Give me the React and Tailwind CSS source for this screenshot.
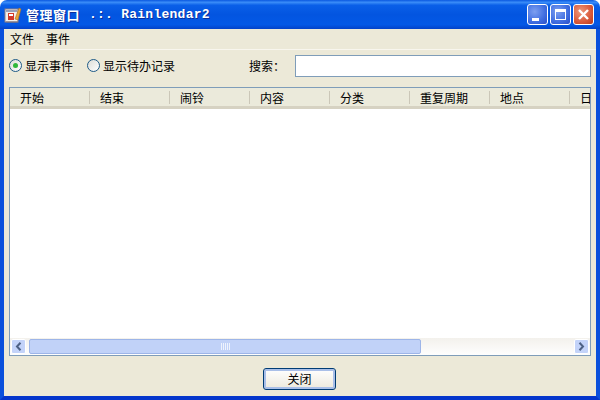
const columns = ['开始', '结束', '闹铃', '内容', '分类', '重复周期', '地点', '日期'];

const cjk = { fontFamily: '"Noto Sans CJK SC", "Liberation Sans", sans-serif' };

const AppIcon = () => (
  <svg width="18" height="18" viewBox="0 0 18 18">
    <rect x="1" y="3" width="13" height="13" fill="#f4f0ea" stroke="#8a7f88" />
    <rect x="2" y="4" width="11" height="2" fill="#9aa0b8" />
    <rect x="4" y="7" width="6" height="7" fill="#d43a2a" />
    <rect x="5" y="8" width="4" height="2" fill="#fff" />
    <path d="M11 13 L15 2 L17 3 L14 14 Z" fill="#e8a53a" stroke="#a8702a" strokeWidth="0.6" />
    <path d="M2 16 H14" stroke="#7a7078" />
  </svg>
);

const CaptionButton = ({ kind }) => {
  const bg = kind === 'close'
    ? 'bg-[radial-gradient(circle_at_35%_35%,#ee9a7c,#d9593a_60%,#b83a1c)]'
    : 'bg-[radial-gradient(circle_at_35%_35%,#7d9ff0,#3f6de0_60%,#2a4fc8)]';
  return (
    <div className={`w-[21px] h-[21px] rounded-[3px] border border-white flex items-center justify-center ${bg}`}>
      {kind === 'min' && <div className="w-[7px] h-[3px] bg-white mt-[9px] mr-[4px]" />}
      {kind === 'max' && <div className="w-[11px] h-[11px] border border-white border-t-[3px]" />}
      {kind === 'close' && (
        <svg width="13" height="13" viewBox="0 0 13 13">
          <path d="M2 2 L11 11 M11 2 L2 11" stroke="#fff" strokeWidth="2.4" />
        </svg>
      )}
    </div>
  );
};

const Radio = ({ checked, label }) => (
  <div className="flex items-center gap-[3px]">
    <div className="w-[13px] h-[13px] rounded-full border border-[#1d5a87] bg-[linear-gradient(135deg,#dcdcd6,#ffffff)] flex items-center justify-center">
      {checked && <div className="w-[5px] h-[5px] rounded-full bg-[#2fb83a]" />}
    </div>
    <span className="text-[12px] leading-none text-black">{label}</span>
  </div>
);

const ScrollButton = ({ dir }) => (
  <div className="w-[15px] h-[15px] rounded-[2px] bg-[#c3d3f9] border border-white flex items-center justify-center shrink-0">
    <svg width="7" height="9" viewBox="0 0 7 9">
      <path d={dir === 'left' ? 'M5.5 0.8 L2 4.5 L5.5 8.2' : 'M1.5 0.8 L5 4.5 L1.5 8.2'} fill="none" stroke="#4d6185" strokeWidth="2" />
    </svg>
  </div>
);

export default function App() {
  return (
    <div className="w-[600px] h-[400px] flex flex-col overflow-hidden" style={cjk}>
      <div className="h-[29px] shrink-0 rounded-t-[7px] flex items-center pl-[4px] pr-[6px] bg-[linear-gradient(180deg,#0a58e0_0%,#3a8cf8_8%,#0a5fe8_18%,#0355e0_50%,#0358e6_85%,#0342c8_100%)]">
        <AppIcon />
        <div className="ml-[4px] flex items-center text-white font-bold text-[13px] leading-none [text-shadow:1px_1px_0_#0a2f9c]">
          <span className="tracking-[0.5px]">管理窗口</span>
          <span className="ml-[9px] tracking-[0.25px]" style={{ fontFamily: '"Liberation Mono", monospace' }}>.:. Rainlendar2</span>
        </div>
        <div className="ml-auto flex gap-[2px]">
          <CaptionButton kind="min" />
          <CaptionButton kind="max" />
          <CaptionButton kind="close" />
        </div>
      </div>

      <div className="flex-1 min-h-0 flex flex-col bg-[#ece9d8] border-x-[4px] border-b-[4px] border-x-[#0a50dc] border-b-[#0335cc]">
        <div className="h-[21px] shrink-0 flex items-center gap-[12px] pl-[6px] border-b border-[#f8f6ee] text-[12px] leading-none text-black">
          <span>文件</span>
          <span>事件</span>
        </div>

        <div className="h-[30px] shrink-0 flex items-center pt-[1px] pl-[5px] pr-[5px]">
          <div className="w-[78px]"><Radio checked label="显示事件" /></div>
          <Radio label="显示待办记录" />
          <span className="ml-[74px] text-[12px] leading-none text-black w-[46px]">搜索：</span>
          <div className="flex-1 h-[22px] bg-white border border-[#7f9db9]" />
        </div>

        <div className="mt-[7px] mx-[5px] h-[269px] shrink-0 flex flex-col bg-white border border-[#7f9db9] overflow-hidden">
          <div className="h-[21px] shrink-0 flex bg-[#ebeadb] border-b-[3px] border-[#d6d2c2] overflow-hidden">
            {columns.map((name) => (
              <div key={name} className="w-[80px] shrink-0 relative pl-[10px] text-[12px] leading-[19px] text-black">
                {name}
                <div className="absolute right-0 top-[3px] h-[13px] w-px bg-[#cbc7b8]" />
              </div>
            ))}
          </div>
          <div className="flex-1" />
          <div className="h-[17px] shrink-0 flex items-center pl-[1px] pr-[1px] bg-[linear-gradient(180deg,#f3f1ec,#fefefe)]">
            <ScrollButton dir="left" />
            <div className="ml-[3px] w-[392px] h-[15px] rounded-[2px] bg-[#c1d2f8] border border-[#9db5e8] flex items-center justify-center">
              <div className="flex gap-px">
                {[0, 1, 2, 3, 4].map((i) => <div key={i} className="w-px h-[7px] bg-[#eef3fd]" />)}
              </div>
            </div>
            <div className="flex-1" />
            <ScrollButton dir="right" />
          </div>
        </div>

        <div className="flex-1 flex items-start justify-center pt-[12px] pr-[1px]">
          <div className="w-[73px] h-[22px] rounded-[3px] border border-[#003c74] bg-[linear-gradient(180deg,#ffffff,#ece9dc)] shadow-[inset_0_0_0_2px_#a9bfe8] flex items-center justify-center text-[12px] leading-none text-black">
            关闭
          </div>
        </div>
      </div>
    </div>
  );
}
